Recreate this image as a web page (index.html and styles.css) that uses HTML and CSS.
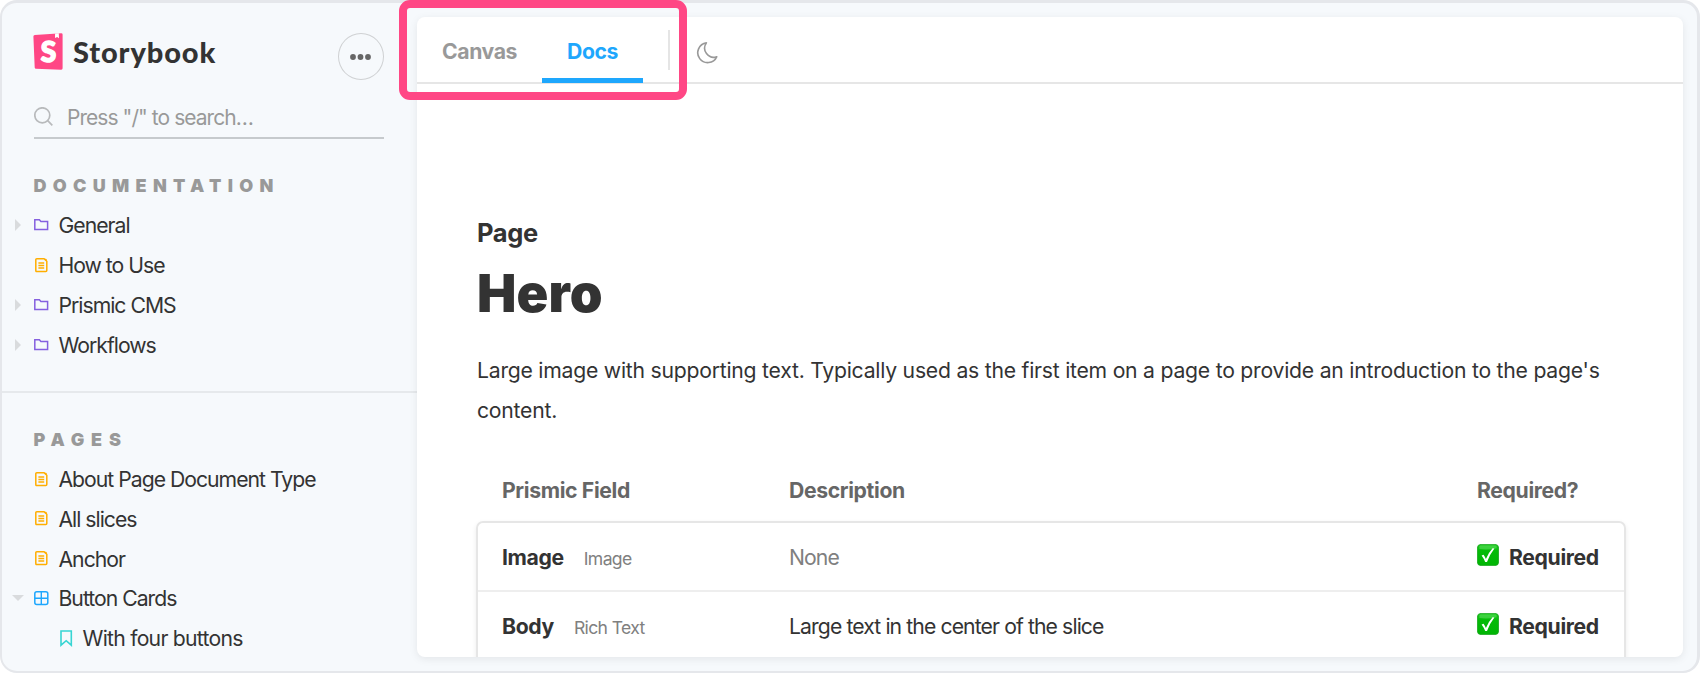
FILE: index.html
```html
<!DOCTYPE html>
<html lang="en">
<head>
<meta charset="utf-8">
<title>Page / Hero - Docs - Storybook</title>
<link rel="stylesheet" href="styles.css">
</head>
<body>
<svg class="sprite" aria-hidden="true">
  <symbol id="folder" viewBox="0 0 15 12"><path d="M.8 .8H5.4L6.9 2.4H13.6V10.6H.8Z" fill="none" stroke="currentColor" stroke-width="1.5"/></symbol>
  <symbol id="document" viewBox="0 0 13 15"><path d="M1.8 .8H9L11.8 3.3V12.6Q11.8 13.6 10.8 13.6H1.8Q.8 13.6 .8 12.6V1.8Q.8 .8 1.8 .8Z" fill="none" stroke="currentColor" stroke-width="1.5"/><path d="M8.9 .8H10.8Q11.8 .8 11.8 1.8V3.6Z" fill="currentColor"/><path d="M3.4 5H9.2M3.4 7.5H9.2M3.4 10H9.2" stroke="currentColor" stroke-width="1.3"/></symbol>
  <symbol id="component" viewBox="0 0 15 15"><rect x=".8" y=".8" width="13" height="12.8" rx="2" fill="none" stroke="currentColor" stroke-width="1.5"/><path d="M7.3 .8V13.6M.8 7.2H13.8" stroke="currentColor" stroke-width="1.4"/></symbol>
  <symbol id="bookmark" viewBox="0 0 13 17"><path d="M1 1H11.3V15.2L6.2 10.7L1 15.2Z" fill="none" stroke="currentColor" stroke-width="1.6"/></symbol>
  <symbol id="check" viewBox="0 0 22 22"><defs><linearGradient id="green" x1="0" y1="0" x2="0" y2="1"><stop offset="0" stop-color="#20cb22"/><stop offset=".3" stop-color="#05bb08"/><stop offset="1" stop-color="#00b504"/></linearGradient></defs><rect x=".4" y=".4" width="21.2" height="21.2" rx="3.6" fill="url(#green)" stroke="#15a51b" stroke-width=".8"/><path d="M2.4 2.2Q2.4 1.6 3.6 1.6H18.4Q19.6 1.6 19.6 2.4V4.2Q11 6.2 2.4 5Z" fill="#5fdc60" opacity=".55"/><path d="M4.6 11.6L6.6 10.7Q8 12.8 8.9 15Q11.6 8.6 15.6 4.3L17.4 4.6Q12.8 10.5 10 18.1H8.2Q6.8 14.6 4.6 11.6Z" fill="#fff"/></symbol>
</svg>
<div class="frame">
  <aside class="sidebar">
    <header class="brand">
      <svg class="logo" viewBox="0 0 30 37"><path d="M1.8 1.9L28.2 .2Q29.6 .2 29.6 1.5V35.3Q29.6 36.8 28.1 36.7L3 35.7Q1.8 35.6 1.7 34.4L.4 3.4Q.4 2 1.8 1.9Z" fill="#ff4785"/><path d="M22.1 .6L25.8 .3L26 5.2L24.1 3.9L22 5Z" fill="#fff"/><text class="logo-letter" x="15.5" y="29" text-anchor="middle" textLength="15.5" lengthAdjust="spacingAndGlyphs">S</text></svg>
      <span class="wordmark">Storybook</span>
      <button class="menu-button" aria-label="Shortcuts"><svg width="21" height="6" viewBox="0 0 21 6" fill="#666"><circle cx="3" cy="3" r="2.9"/><circle cx="10.5" cy="3" r="2.9"/><circle cx="18" cy="3" r="2.9"/></svg></button>
    </header>
    <div class="search">
      <svg width="20" height="20" viewBox="0 0 20 20" fill="none" stroke="#b8babc" stroke-width="1.7"><circle cx="8.3" cy="8.3" r="7.5"/><path d="M13.7 13.7L18.3 18.3"/></svg>
      <span>Press "/" to search…</span>
    </div>
    <section class="group">
      <h2>DOCUMENTATION</h2>
      <ul>
        <li><i class="arrow right"></i><svg class="icon folder"><use href="#folder"/></svg><span>General</span></li>
        <li><i class="arrow"></i><svg class="icon document"><use href="#document"/></svg><span>How to Use</span></li>
        <li><i class="arrow right"></i><svg class="icon folder"><use href="#folder"/></svg><span>Prismic CMS</span></li>
        <li><i class="arrow right"></i><svg class="icon folder"><use href="#folder"/></svg><span>Workflows</span></li>
      </ul>
    </section>
    <section class="group pages">
      <h2>PAGES</h2>
      <ul>
        <li><i class="arrow"></i><svg class="icon document"><use href="#document"/></svg><span>About Page Document Type</span></li>
        <li><i class="arrow"></i><svg class="icon document"><use href="#document"/></svg><span>All slices</span></li>
        <li><i class="arrow"></i><svg class="icon document"><use href="#document"/></svg><span>Anchor</span></li>
        <li><i class="arrow down"></i><svg class="icon component"><use href="#component"/></svg><span>Button Cards</span></li>
        <li class="child"><i class="arrow"></i><svg class="icon bookmark"><use href="#bookmark"/></svg><span>With four buttons</span></li>
      </ul>
    </section>
  </aside>
  <main class="panel">
    <nav class="toolbar">
      <span class="tab canvas">Canvas</span>
      <span class="tab active">Docs</span>
      <i class="separator"></i>
      <svg class="moon" width="22" height="22" viewBox="0 0 22 22" fill="none" stroke="#999" stroke-width="1.6" stroke-linejoin="round"><path d="M10.4 .9A9.9 9.9 0 1 0 20.7 14.8A9.1 9.1 0 0 1 10.4 .9Z"/></svg>
    </nav>
    <article class="docs">
      <p class="kind">Page</p>
      <h1>Hero</h1>
      <p class="intro">Large image with supporting text. Typically used as the first item on a page to provide an introduction to the page's<br>content.</p>
      <div class="row head"><span>Prismic Field</span><span>Description</span><span>Required?</span></div>
      <div class="fields">
        <div class="row"><span class="name"><b>Image</b><small>Image</small></span><span class="description none">None</span><span class="required"><svg width="22" height="22"><use href="#check"/></svg><b>Required</b></span></div>
        <div class="row"><span class="name"><b>Body</b><small>Rich Text</small></span><span class="description">Large text in the center of the slice</span><span class="required"><svg width="22" height="22"><use href="#check"/></svg><b>Required</b></span></div>
      </div>
    </article>
  </main>
  <div class="highlight"></div>
</div>
</body>
</html>
```
FILE: styles.css
```css
* { box-sizing: border-box; }
body { margin: 0; background: #fff; color: #333; font-family: Inter, "Liberation Sans", sans-serif; }
h1, h2, p, ul { margin: 0; padding: 0; }
ul { list-style: none; }
.sprite { position: absolute; width: 0; height: 0; }
.frame { position: relative; display: flex; width: 1700px; height: 673px; padding: 14px 14px 14px 0; border: 3px solid #e5e7eb; border-left-width: 2px; border-bottom-width: 2px; border-radius: 17px; background: #f6f9fc; }
.sidebar { width: 415px; flex: none; }
.brand { display: flex; align-items: flex-start; height: 74px; padding: 16px 33px 0 31px; }
.logo { width: 30px; height: 37px; flex: none; }
.logo-letter { font: 900 28px Lato, sans-serif; fill: #fff; stroke: #fff; stroke-width: 1.4; }
.wordmark { margin-left: 10px; font: 900 29px/38px Lato, "Open Sans", sans-serif; letter-spacing: .9px; color: #333; }
.menu-button { display: flex; align-items: center; justify-content: center; width: 46px; height: 47px; margin-left: auto; padding: 0 1px 0 0; border: 1.5px solid #cfd1d3; border-radius: 50%; background: none; }
.search { display: flex; align-items: center; height: 48px; margin: 0 33px 0 32px; padding: 5px 0 0; border-bottom: 2px solid #c6cacd; font-size: 21px; line-height: 26px; letter-spacing: -.95px; color: #999; }
.search span { margin: 2px 0 0 13px; }
.group { padding-top: 38px; }
.group h2 { padding-left: 31.5px; font-size: 18px; line-height: 18px; font-weight: 900; letter-spacing: 6.3px; color: #999; }
.group ul { padding-top: 10.5px; }
.group li { display: flex; align-items: center; height: 39.8px; font-size: 21.2px; letter-spacing: -1px; white-space: nowrap; }
.pages { margin-top: 26px; border-top: 2px solid #e6e9ec; padding-top: 38px; }
.pages h2 { letter-spacing: 6.8px; }
.pages ul { padding-top: 10.5px; }
.arrow { width: 31.5px; flex: none; }
.arrow::before { content: ""; display: block; width: 0; height: 0; margin-left: 13px; }
.arrow.right::before { border: 6px solid transparent; border-left-color: #d9dbdd; border-right-width: 0; }
.arrow.down::before { margin-left: 10px; border: 6px solid transparent; border-top-color: #d9dbdd; border-bottom-width: 0; }
.icon { flex: none; margin-top: 0; }
.icon + span { margin-left: 10px; }
.folder { width: 15px; height: 12px; color: #8560df; }
.document { width: 13px; height: 15px; margin-left: 1px; color: #ffae00; }
.document + span { margin-left: 11px; }
.component { width: 15px; height: 15px; color: #1ea7fd; }
.child { padding-left: 26px; }
.child span { letter-spacing: -.75px; }
.bookmark { width: 13px; height: 17px; color: #37d5d3; }
.panel { width: 1266px; height: 640px; border-radius: 8px; background: #fff; box-shadow: 0 2px 9px rgba(0,0,0,.08); overflow: hidden; }
.toolbar { display: flex; height: 67px; padding-left: 25px; border-bottom: 2px solid #e6e6e6; }
.tab { height: 66px; padding: 18px 0 0; font-size: 21.2px; line-height: 32px; font-weight: 700; letter-spacing: -.4px; color: #999; }
.canvas { width: 100px; }
.active { width: 101px; border-bottom: 5px solid #1ea7fd; color: #1ea7fd; text-align: center; }
.separator { width: 1.5px; height: 40px; margin: 13px 0 0 25px; background: #e5e5e5; }
.moon { margin: 25px 0 0 26px; }
.docs { padding: 131px 58px 0 60px; }
.kind { font-size: 25.5px; line-height: 36px; font-weight: 700; letter-spacing: -.4px; }
h1 { margin-top: 16px; font-size: 52.5px; line-height: 52px; font-weight: 900; letter-spacing: .1px; }
.intro { margin-top: 31px; font-size: 21.2px; line-height: 40px; letter-spacing: -.24px; white-space: nowrap; }
.row { display: grid; grid-template-columns: 287px 688px auto; align-items: center; height: 69px; padding-left: 25px; font-size: 21.2px; letter-spacing: -.36px; white-space: nowrap; }
.head { height: 62px; margin-top: 29px; font-weight: 700; color: #666; }
.fields { width: 1150px; margin-left: -1px; border: 2px solid #e6e6e6; border-radius: 7px; box-shadow: 0 2px 5px rgba(0,0,0,.08); height: 160px; }
.fields .row { height: 67px; padding-left: 24px; }
.fields .row + .row { height: 69px; border-top: 2px solid #eee; }
.name small { margin-left: 20px; font-size: 17.6px; letter-spacing: -.65px; color: #808080; }
.description { letter-spacing: -.9px; }
.none { color: #808080; }
.required { display: flex; align-items: center; gap: 10px; }
.required svg { margin-top: -4px; }
.highlight { position: absolute; left: 397px; top: -3px; width: 288px; height: 100px; border: 8px solid #ff4785; border-radius: 11px; }
```
